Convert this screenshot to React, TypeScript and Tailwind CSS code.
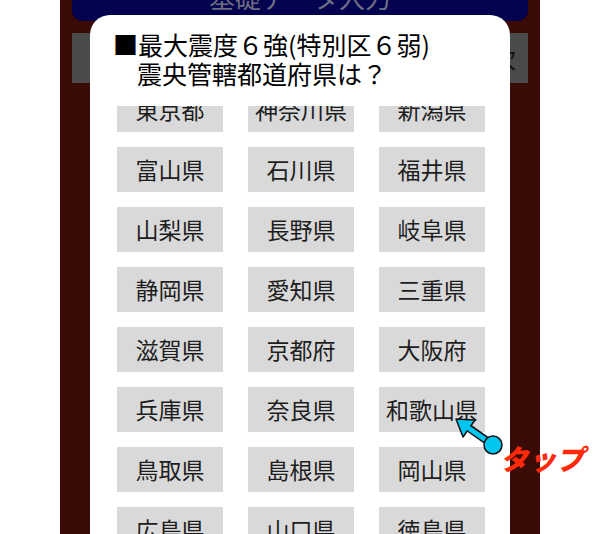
import React from "react";

const rows: string[][] = [
  ["東京都", "神奈川県", "新潟県"],
  ["富山県", "石川県", "福井県"],
  ["山梨県", "長野県", "岐阜県"],
  ["静岡県", "愛知県", "三重県"],
  ["滋賀県", "京都府", "大阪府"],
  ["兵庫県", "奈良県", "和歌山県"],
  ["鳥取県", "島根県", "岡山県"],
  ["広島県", "山口県", "徳島県"],
];

const font = { fontFamily: '"Noto Sans CJK JP", "Noto Sans", sans-serif' };

export default function App() {
  return (
    <div className="relative w-[600px] h-[534px] overflow-hidden bg-white" style={font}>
      {/* background app panel */}
      <div className="ml-[60px] w-[480px] h-full bg-[#3b0b08] px-[12px] flex flex-col">
        <div className="h-[21px] bg-[#03034f] rounded-b-[10px] overflow-hidden flex items-end justify-center">
          <span className="text-[26px] leading-[26px] mb-[11px] text-[#6e6e82]">基礎データ入力</span>
        </div>
        <div className="mt-[12px] h-[50px] bg-[#4a4a4a] flex items-center justify-end pr-[12px]">
          <span className="text-[24px] text-[#111]">次</span>
        </div>
      </div>

      {/* modal */}
      <div className="absolute left-[90px] top-[15px] w-[420px] h-[560px] bg-white rounded-[20px] flex flex-col">
        <div className="pl-[23px] pt-[15px] text-[25px] leading-[29px] text-black">
          <div>■最大震度６強(特別区６弱)</div>
          <div className="pl-[24px]">震央管轄都道府県は？</div>
        </div>
        <div className="mt-[18px] h-[440px] overflow-hidden">
          <div className="-mt-[19px] pl-[27px] grid grid-cols-[106px_106px_106px] gap-x-[25px] gap-y-[15px]">
            {rows.flat().map((p) => (
              <div
                key={p}
                className="h-[45px] bg-[#d9d9d9] flex items-center justify-center text-[23px] text-[#1e1e1e]"
              >
                {p}
              </div>
            ))}
          </div>
        </div>
      </div>

      {/* tap indicator */}
      <svg className="absolute left-0 top-0 pointer-events-none" width="600" height="534" viewBox="0 0 600 534">
        <line x1="493" y1="445" x2="466" y2="426" stroke="#111" strokeWidth="8" strokeLinecap="round" />
        <polygon points="456,419 475,420 463,437" fill="#00c6f0" stroke="#111" strokeWidth="1.5" strokeLinejoin="round" />
        <line x1="493" y1="445" x2="467" y2="427" stroke="#00c6f0" strokeWidth="5" strokeLinecap="round" />
        <circle cx="493" cy="445" r="9" fill="#00c6f0" stroke="#111" strokeWidth="1.5" />
      </svg>
      <div className="absolute left-[500px] top-[440px] text-[28px] leading-[36px] font-black italic text-[#ff2a0a]">
        タップ
      </div>
    </div>
  );
}
